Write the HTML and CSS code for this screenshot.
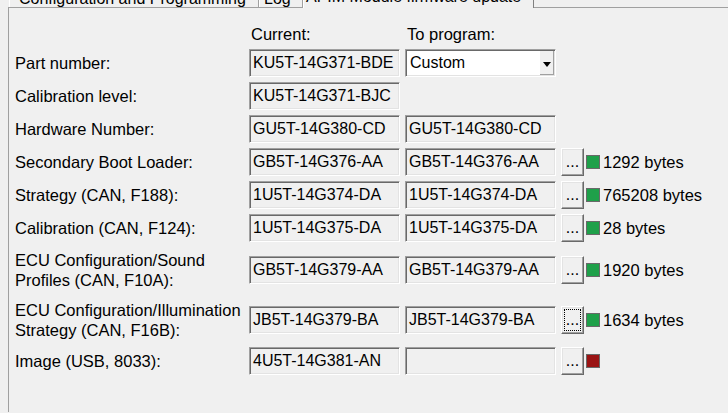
FILE: index.html
```html
<!DOCTYPE html>
<html>
<head>
<meta charset="utf-8">
<link rel="stylesheet" href="styles.css">
</head>
<body>
<div class="tabs">
  <div class="tab t1">Configuration and Programming</div>
  <div class="tab t2">Log</div>
  <div class="tab t3 active">APIM Module firmware update</div>
</div>
<div class="panel">
  <div class="form">
    <div></div>
    <div class="colhead">Current:</div>
    <div class="colhead">To program:</div>
    <div></div>

    <div class="label">Part number:</div>
    <div class="field">KU5T-14G371-BDE</div>
    <div class="select"><span class="sel-text">Custom</span><span class="arrow"><span class="tri"></span></span></div>
    <div></div>

    <div class="label">Calibration level:</div>
    <div class="field">KU5T-14G371-BJC</div>
    <div></div>
    <div></div>

    <div class="label">Hardware Number:</div>
    <div class="field">GU5T-14G380-CD</div>
    <div class="field">GU5T-14G380-CD</div>
    <div></div>

    <div class="label">Secondary Boot Loader:</div>
    <div class="field">GB5T-14G376-AA</div>
    <div class="field">GB5T-14G376-AA</div>
    <div class="tools"><div class="btn">...</div><div class="sq ok"></div><span class="bytes">1292 bytes</span></div>

    <div class="label">Strategy (CAN, F188):</div>
    <div class="field">1U5T-14G374-DA</div>
    <div class="field">1U5T-14G374-DA</div>
    <div class="tools"><div class="btn">...</div><div class="sq ok"></div><span class="bytes">765208 bytes</span></div>

    <div class="label">Calibration (CAN, F124):</div>
    <div class="field">1U5T-14G375-DA</div>
    <div class="field">1U5T-14G375-DA</div>
    <div class="tools"><div class="btn">...</div><div class="sq ok"></div><span class="bytes">28 bytes</span></div>

    <div class="label">ECU Configuration/Sound<br>Profiles (CAN, F10A):</div>
    <div class="field">GB5T-14G379-AA</div>
    <div class="field">GB5T-14G379-AA</div>
    <div class="tools"><div class="btn">...</div><div class="sq ok"></div><span class="bytes">1920 bytes</span></div>

    <div class="label">ECU Configuration/Illumination<br>Strategy (CAN, F16B):</div>
    <div class="field">JB5T-14G379-BA</div>
    <div class="field">JB5T-14G379-BA</div>
    <div class="tools"><div class="btn focus">...</div><div class="sq ok"></div><span class="bytes">1634 bytes</span></div>

    <div class="label">Image (USB, 8033):</div>
    <div class="field">4U5T-14G381-AN</div>
    <div class="field"></div>
    <div class="tools"><div class="btn">...</div><div class="sq bad"></div></div>
  </div>
</div>
</body>
</html>
```
FILE: styles.css
```css
html, body {
  margin: 0;
  padding: 0;
  background: #f0f0f0;
}
body {
  font-family: "Liberation Sans", Arial, sans-serif;
  font-size: 16px;
  color: #000;
  width: 728px;
  height: 413px;
  overflow: hidden;
}

/* tab strip (only bottom sliver visible) */
.tabs {
  display: flex;
  align-items: flex-end;
  height: 7px;
  padding-left: 9px;
  position: relative;
  z-index: 1;
}
.tab {
  box-sizing: border-box;
  height: 22px;
  display: flex;
  align-items: flex-end;
  line-height: 16px;
  white-space: nowrap;
  overflow: hidden;
  border-left: 1px solid #ffffff;
  border-right: 1px solid #a0a0a0;
  background: #f0f0f0;
}
.t1 { width: 250px; padding-left: 9px; }
.t2 { width: 44px; padding-left: 4px; }
.t3 {
  width: 231px;
  padding-left: 2px;
  padding-bottom: 3px;
  height: 24px;
  margin-bottom: -1px;
  border-right: 1px solid #808080;
}

.panel {
  margin-left: 8px;
  border-top: 1px solid #a0a0a0;
  border-left: 1px solid #a0a0a0;
  height: 405px;
  box-sizing: border-box;
  padding: 16px 0 0 6px;
}

.form {
  display: grid;
  grid-template-columns: 229px 151px 151px auto;
  grid-template-rows: 20px repeat(6, 28px) 45px 45px 28px;
  column-gap: 5px;
  row-gap: 5px;
}

.colhead {
  font-size: 16.5px;
  line-height: 20px;
  padding-left: 2px;
}
.label {
  font-size: 16.5px;
  align-self: center;
  line-height: 20px;
  white-space: nowrap;
}

.field, .select {
  align-self: center;
  box-sizing: border-box;
  height: 28px;
  border: 1px solid;
  border-color: #a0a0a0 #ffffff #ffffff #a0a0a0;
  box-shadow: inset 1px 1px 0 #696969, inset -1px -1px 0 #e3e3e3;
  padding-left: 3px;
  line-height: 26px;
  white-space: nowrap;
  overflow: hidden;
}
.select {
  background: #ffffff;
  display: flex;
  justify-content: space-between;
  padding-right: 1px;
}
.sel-text { padding-left: 1px; }
.arrow {
  box-sizing: border-box;
  width: 14px;
  height: 24px;
  margin-top: 1px;
  background: #f0f0f0;
  border-right: 1px solid #a0a0a0;
  border-bottom: 1px solid #a0a0a0;
  display: flex;
  align-items: center;
  justify-content: center;
}
.tri {
  width: 0;
  height: 0;
  margin-top: 3px;
  border-left: 4.5px solid transparent;
  border-right: 4.5px solid transparent;
  border-top: 5px solid #000;
}

.tools {
  align-self: center;
  display: flex;
  align-items: center;
}
.btn {
  box-sizing: border-box;
  width: 23px;
  height: 28px;
  border: 1px solid;
  border-color: #ffffff #696969 #696969 #ffffff;
  box-shadow: inset -1px -1px 0 #a0a0a0, inset 1px 1px 0 #e3e3e3;
  background: #f0f0f0;
  text-align: center;
  line-height: 26px;
}
.btn.focus {
  outline: 1px dotted #000;
  outline-offset: -4px;
}
.sq {
  box-sizing: border-box;
  width: 14px;
  height: 14px;
  margin-left: 2px;
  border: 1px solid #696969;
}
.sq.ok { background: #1fa04a; }
.sq.bad { background: #9a1414; }
.bytes {
  font-size: 16.5px;
  margin-left: 3px;
  line-height: 20px;
  white-space: nowrap;
}
```
